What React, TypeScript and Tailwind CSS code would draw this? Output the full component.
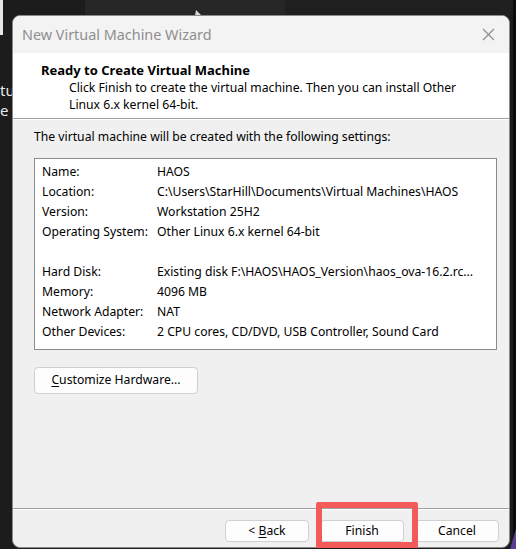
import React from "react";

const font = { fontFamily: '"Noto Sans", "Open Sans", Arial, sans-serif' };

const rows: [string, string][] = [
  ["Name:", "HAOS"],
  ["Location:", "C:\\Users\\StarHill\\Documents\\Virtual Machines\\HAOS"],
  ["Version:", "Workstation 25H2"],
  ["Operating System:", "Other Linux 6.x kernel 64-bit"],
  ["", ""],
  ["Hard Disk:", "Existing disk F:\\HAOS\\HAOS_Version\\haos_ova-16.2.rc..."],
  ["Memory:", "4096 MB"],
  ["Network Adapter:", "NAT"],
  ["Other Devices:", "2 CPU cores, CD/DVD, USB Controller, Sound Card"],
];

function WinButton({ children, className = "" }: { children: React.ReactNode; className?: string }) {
  return (
    <div
      className={`flex items-center justify-center rounded-[4px] border border-[#d0d0d0] bg-[#fdfdfd] text-[12.2px] text-black ${className}`}
    >
      {children}
    </div>
  );
}

export default function App() {
  return (
    <div className="relative h-[549px] w-[516px] overflow-hidden bg-[#1c1c1c]" style={font}>
      {/* desktop behind the dialog */}
      <div className="absolute left-0 top-0 h-[35px] w-[3px] bg-[#e6e6e6]" />
      <div className="absolute left-[85px] top-0 h-[15px] w-[200px] bg-[#262626]" />
      <div className="absolute left-[285px] top-0 h-[15px] w-[231px] bg-[#1f1f1f]" />
      <svg className="absolute left-[195px] top-[10px]" width="8" height="6" viewBox="0 0 8 6">
        <polygon points="1,0 7,6 0,6" fill="#d8d8d8" />
      </svg>
      <div className="absolute left-0 top-[80px] text-[15px] leading-[20px] text-[#e8e8e8]">
        <div>tu</div>
        <div>e</div>
      </div>
      <div className="absolute right-[0px] top-[0px] h-[549px] w-[3px] bg-[#0c0c0c]" />
      <svg className="absolute bottom-0 right-0" width="6" height="20" viewBox="0 0 6 20">
        <polygon points="6,0 6,20 0,20" fill="#5b3f8f" />
      </svg>

      {/* wizard window */}
      <div className="absolute left-[12px] top-[15px] flex h-[533px] w-[498px] flex-col overflow-hidden rounded-[8px] border border-[#8a8a8a] bg-[#f0f0f0]">
        {/* title bar */}
        <div className="flex h-[37px] shrink-0 items-center justify-between bg-[#f3f3f3] pl-[9px] pr-[14px]">
          <span className="text-[14.4px] text-[#8f8f8f]">New Virtual Machine Wizard</span>
          <svg width="13" height="13" viewBox="0 0 13 13">
            <path d="M1 1 L12 12 M12 1 L1 12" stroke="#8a8a8a" strokeWidth="1.1" />
          </svg>
        </div>

        {/* header */}
        <div className="h-[65px] shrink-0 bg-white pl-[28px] pt-[8px]">
          <div className="text-[13px] font-bold leading-[18px] text-black">Ready to Create Virtual Machine</div>
          <div className="pl-[28px] text-[12.2px] leading-[17px] text-black">
            Click Finish to create the virtual machine. Then you can install Other
            <br />
            Linux 6.x kernel 64-bit.
          </div>
        </div>
        <div className="h-px shrink-0 bg-[#a0a0a0]" />
        <div className="h-px shrink-0 bg-white" />

        {/* body */}
        <div className="flex flex-1 flex-col pl-[21px] pr-[12px] pt-[8px]">
          <div className="text-[12.2px] leading-[17px] text-black">
            The virtual machine will be created with the following settings:
          </div>
          <div className="mt-[13px] h-[192px] border border-[#8c8c8c] bg-white pl-[7px] pt-[3px]">
            {rows.map(([k, v], i) => (
              <div key={i} className="flex h-[20px] items-center text-[12.2px] text-black">
                <span className="w-[115px] shrink-0">{k}</span>
                <span className="whitespace-nowrap">{v}</span>
              </div>
            ))}
          </div>
          <WinButton className="mt-[17px] h-[27px] w-[164px]">
            <span>
              <span className="underline underline-offset-2">C</span>ustomize Hardware...
            </span>
          </WinButton>
        </div>

        {/* footer */}
        <div className="h-px shrink-0 bg-[#a0a0a0]" />
        <div className="h-px shrink-0 bg-white" />
        <div className="flex h-[37px] shrink-0 justify-end gap-[11px] pr-[10px] pt-[10px]">
          <WinButton className="h-[22px] w-[84px]">
            <span>
              &lt; <span className="underline underline-offset-2">B</span>ack
            </span>
          </WinButton>
          <WinButton className="h-[22px] w-[84px]">Finish</WinButton>
          <WinButton className="h-[22px] w-[84px]">Cancel</WinButton>
        </div>
      </div>

      {/* highlight around the Finish button */}
      <div className="absolute left-[316px] top-[502px] h-[46px] w-[102px] rounded-[2px] border-[6px] border-[#f55a5a]" />
    </div>
  );
}
